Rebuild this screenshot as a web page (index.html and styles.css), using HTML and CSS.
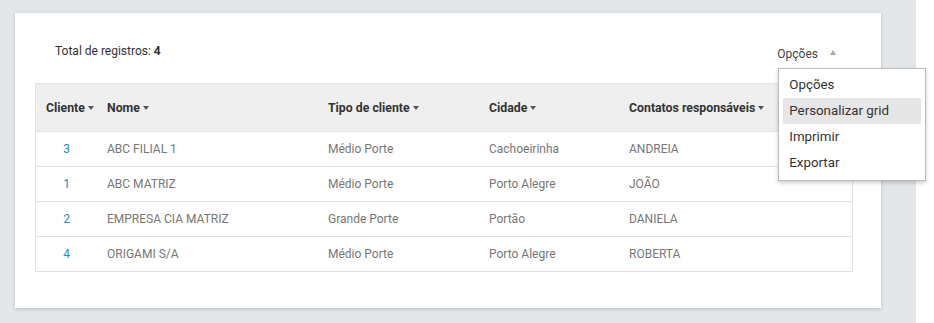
FILE: index.html
```html
<!DOCTYPE html>
<html lang="pt-BR">
  <head>
    <meta charset="UTF-8">
    <title>Clientes</title>
    <link rel="stylesheet" href="styles.css">
  </head>
  <body>
    <div class="page">
      <section class="card">
        <div class="toolbar">
          <div class="total">Total de registros: <strong>4</strong></div>
          <div class="options">
            <span class="options-label">Opções</span>
            <span class="caret-up"></span>
            <ul class="menu">
              <li>Opções</li>
              <li class="active">Personalizar grid</li>
              <li>Imprimir</li>
              <li>Exportar</li>
            </ul>
          </div>
        </div>

        <table class="grid">
          <thead>
            <tr>
              <th class="col-id">Cliente<span class="caret"></span></th>
              <th class="col-name">Nome<span class="caret"></span></th>
              <th class="col-type">Tipo de cliente<span class="caret"></span></th>
              <th class="col-city">Cidade<span class="caret"></span></th>
              <th>Contatos responsáveis<span class="caret"></span></th>
            </tr>
          </thead>
          <tbody>
            <tr>
              <td class="id">3</td>
              <td>ABC FILIAL 1</td>
              <td>Médio Porte</td>
              <td>Cachoeirinha</td>
              <td>ANDREIA</td>
            </tr>
            <tr>
              <td class="id">1</td>
              <td>ABC MATRIZ</td>
              <td>Médio Porte</td>
              <td>Porto Alegre</td>
              <td>JOÃO</td>
            </tr>
            <tr>
              <td class="id">2</td>
              <td>EMPRESA CIA MATRIZ</td>
              <td>Grande Porte</td>
              <td>Portão</td>
              <td>DANIELA</td>
            </tr>
            <tr>
              <td class="id">4</td>
              <td>ORIGAMI S/A</td>
              <td>Médio Porte</td>
              <td>Porto Alegre</td>
              <td>ROBERTA</td>
            </tr>
          </tbody>
        </table>
      </section>
    </div>
  </body>
</html>
```

FILE: styles.css
```css
body, html {
  margin: 0;
  padding: 0;
  height: 100%;
  background-color: #fff;
  font-family: Roboto, 'Liberation Sans', sans-serif;
  color: #333;
}

.page {
  width: 916px;
  height: 323px;
  background-color: #e3e7ea;
  padding: 13px 0 0 15px;
  box-sizing: border-box;
}

.card {
  width: 866px;
  height: 295px;
  background-color: #fff;
  box-shadow: 0 1px 4px rgba(0, 0, 0, 0.18);
  padding: 0 29px 0 20px;
  box-sizing: border-box;
}

.toolbar {
  display: flex;
  justify-content: space-between;
  align-items: center;
  height: 70px;
  padding: 0 0 0 20px;
}

.total {
  font-size: 12px;
  color: #333;
  margin-top: 6px;
}

.total strong {
  font-weight: bold;
}

.options {
  position: relative;
  display: flex;
  align-items: center;
  font-size: 12px;
  color: #444;
  margin-right: 16px;
  margin-top: 12px;
}

.caret-up {
  display: inline-block;
  width: 0;
  height: 0;
  margin-left: 12px;
  margin-top: -4px;
  border-left: 3px solid transparent;
  border-right: 3px solid transparent;
  border-bottom: 5px solid #aaa;
}

.menu {
  position: absolute;
  top: 21px;
  left: 1px;
  width: 148px;
  margin: 0;
  padding: 3px 4px 4px;
  list-style: none;
  background-color: #fff;
  border: 1px solid #bbb;
  box-shadow: 0 2px 4px rgba(0, 0, 0, 0.2);
  box-sizing: border-box;
  z-index: 2;
}

.menu li {
  height: 26px;
  line-height: 26px;
  padding: 0 6px;
  font-size: 13.3px;
  color: #333;
  white-space: nowrap;
}

.menu li.active {
  background-color: #e6e6e6;
}

.grid {
  width: 818px;
  border-collapse: collapse;
  border: 1px solid #e2e2e2;
  font-size: 12px;
}

.grid th {
  height: 47px;
  background-color: #efefef;
  text-align: left;
  font-weight: bold;
  font-size: 12.3px;
  color: #333;
  padding: 0 0 0 10px;
  white-space: nowrap;
}

.grid th.col-id {
  width: 51px;
}

.grid th.col-name {
  width: 211px;
}

.grid th.col-type {
  width: 151px;
}

.grid th.col-city {
  width: 130px;
}

.caret {
  display: inline-block;
  width: 0;
  height: 0;
  margin-left: 3px;
  vertical-align: middle;
  border-left: 3.5px solid transparent;
  border-right: 3.5px solid transparent;
  border-top: 4px solid #555;
}

.grid td {
  height: 34px;
  padding: 0 0 0 10px;
  color: #777;
  border-top: 1px solid #e2e2e2;
}

.grid td.id {
  color: #2a86c6;
  text-align: center;
  padding-left: 0;
}
```
